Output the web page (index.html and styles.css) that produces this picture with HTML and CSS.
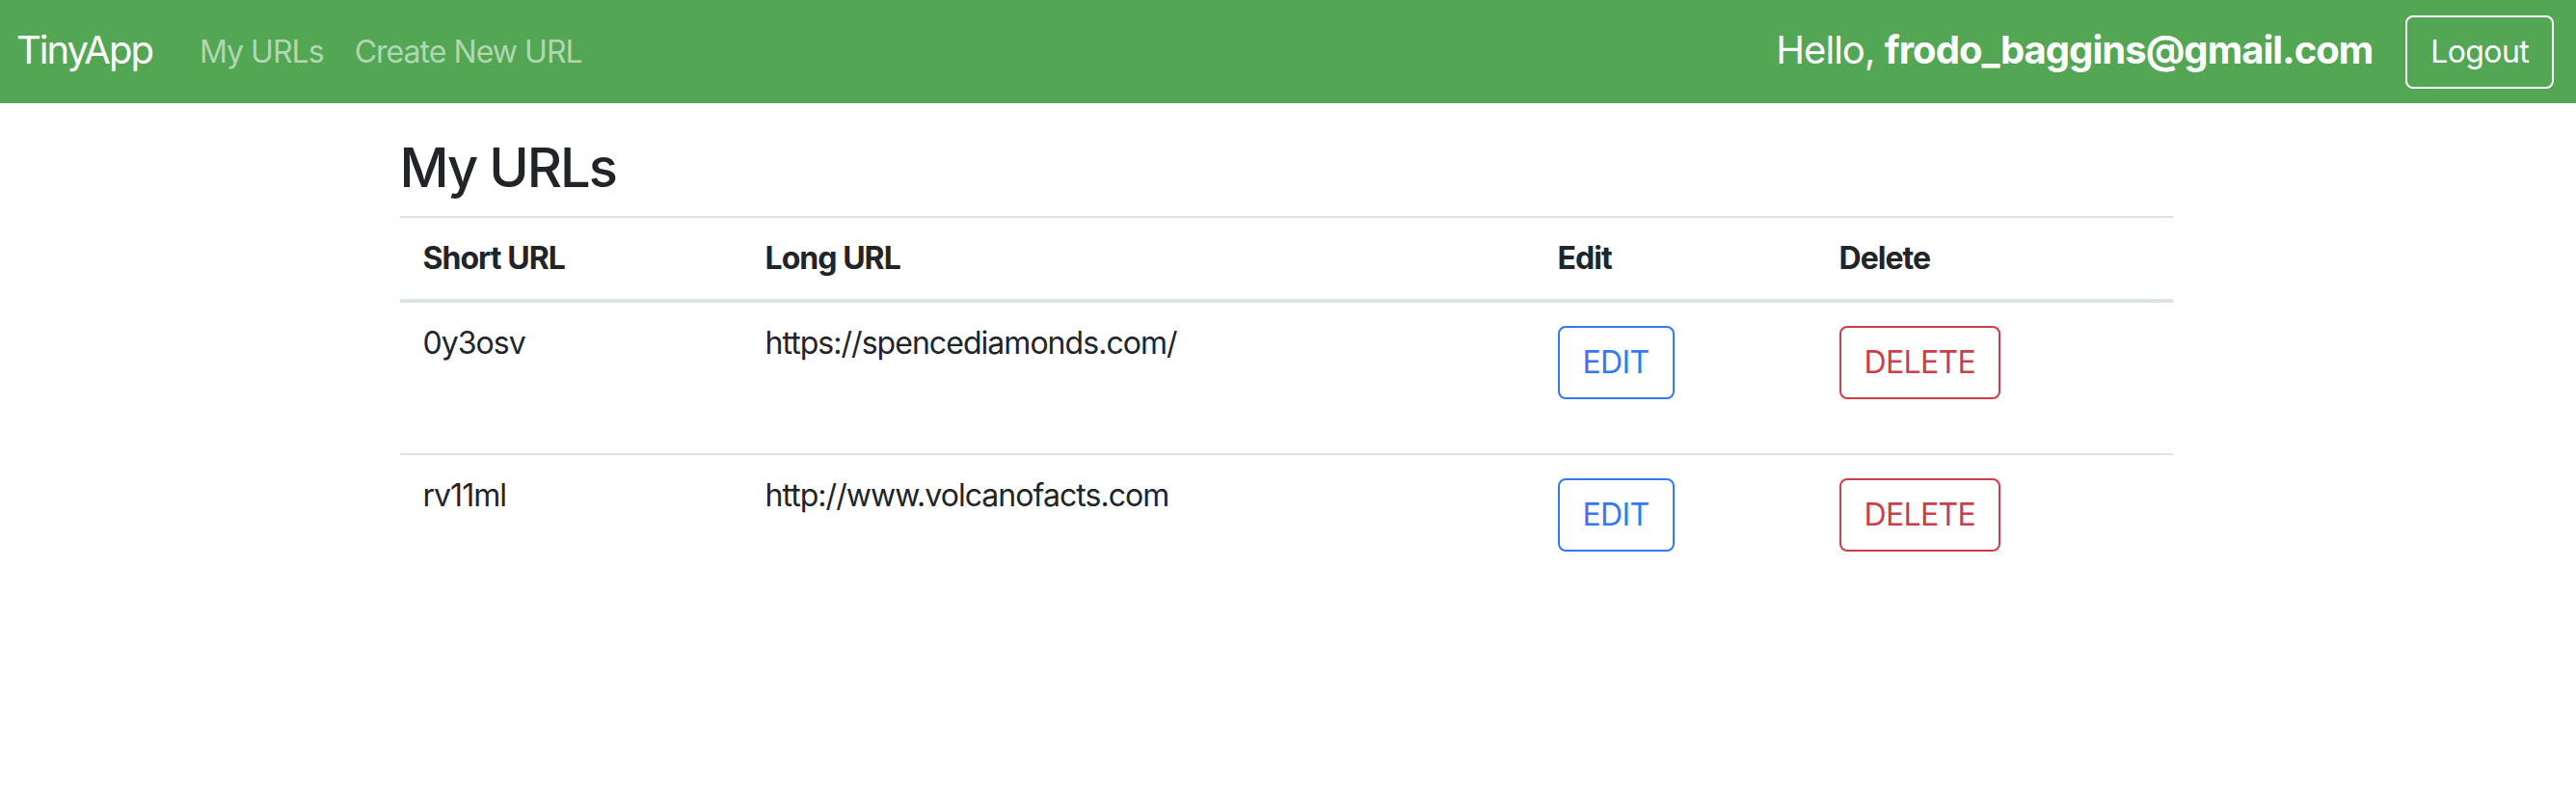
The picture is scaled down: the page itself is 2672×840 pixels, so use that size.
FILE: index.html
```html
<!DOCTYPE html>
<html lang="en">
<head>
<meta charset="utf-8">
<title>TinyApp</title>
<link rel="stylesheet" href="styles.css">
</head>
<body>
<nav class="navbar">
  <a class="brand" href="#">TinyApp</a>
  <div class="nav-links">
    <a class="nav-link" href="#">My URLs</a>
    <a class="nav-link" href="#">Create New URL</a>
  </div>
  <div class="spacer"></div>
  <span class="greeting">Hello, <b>frodo_baggins@gmail.com</b></span>
  <button class="btn btn-light-outline">Logout</button>
</nav>
<main class="container">
  <h3 class="title">My URLs</h3>
  <table class="url-table">
    <thead>
      <tr>
        <th class="col-short">Short URL</th>
        <th class="col-long">Long URL</th>
        <th class="col-edit">Edit</th>
        <th class="col-delete">Delete</th>
      </tr>
    </thead>
    <tbody>
      <tr>
        <td>0y3osv</td>
        <td>https://spencediamonds.com/</td>
        <td><form class="cell-form"><button type="button" class="btn btn-outline-primary">EDIT</button></form></td>
        <td><form class="cell-form"><button type="button" class="btn btn-outline-danger">DELETE</button></form></td>
      </tr>
      <tr>
        <td>rv11ml</td>
        <td>http://www.volcanofacts.com</td>
        <td><form class="cell-form"><button type="button" class="btn btn-outline-primary">EDIT</button></form></td>
        <td><form class="cell-form"><button type="button" class="btn btn-outline-danger">DELETE</button></form></td>
      </tr>
    </tbody>
  </table>
</main>
</body>
</html>
```

FILE: styles.css
```css
* { box-sizing: border-box; }

html, body {
  margin: 0;
  padding: 0;
  background: #ffffff;
}

body {
  font-family: Inter, "Noto Sans", "Liberation Sans", sans-serif;
  font-size: 32px;
  line-height: 1.5;
  letter-spacing: -0.03em;
  color: #212529;
}

a { text-decoration: none; }

.navbar {
  display: flex;
  align-items: center;
  height: 107px;
  padding: 0 23px 0 17px;
  background: #53a653;
}

.brand {
  font-size: 40px;
  line-height: 60px;
  letter-spacing: -0.05em;
  color: #ffffff;
  margin-right: 33px;
  margin-top: -4px;
}

.nav-links {
  display: flex;
}

.nav-link {
  padding: 0 16px;
  font-size: 32px;
  line-height: 48px;
  color: #b1d7b1;
}

.spacer { flex: 1; }

.greeting {
  font-size: 40px;
  line-height: 60px;
  color: #ffffff;
  margin-right: 34px;
  margin-top: -4px;
}

.greeting b { font-weight: 700; }

.btn {
  display: inline-block;
  font-family: inherit;
  font-size: 32px;
  line-height: 48px;
  letter-spacing: -0.02em;
  padding: 12px 24px;
  border: 2px solid transparent;
  border-radius: 8px;
  background: transparent;
  cursor: pointer;
}

.btn-light-outline {
  color: #ffffff;
  border-color: #ffffff;
}

.btn-outline-primary {
  color: #3479f2;
  border-color: #3479f2;
}

.btn-outline-danger {
  color: #ca3f48;
  border-color: #ca3f48;
}

.container {
  width: 1843px;
  margin: 0 auto;
  padding: 34px 4px 0 0;
}

.title {
  margin: 0 0 16px;
  font-size: 56px;
  font-weight: 500;
  line-height: 1.2;
  letter-spacing: -0.035em;
}

.url-table {
  width: 100%;
  border-collapse: collapse;
  table-layout: fixed;
}

.url-table th,
.url-table td {
  padding: 24px;
  text-align: left;
  vertical-align: top;
  line-height: 36px;
  border-top: 2px solid #dee2e6;
}

.url-table th {
  font-weight: 700;
  border-bottom: 4px solid #dee2e6;
}

.col-short { width: 355px; }
.col-long { width: 822px; }
.col-edit { width: 292px; }
.col-delete { width: 370px; }

.cell-form {
  margin: 0 0 32px;
}
```
